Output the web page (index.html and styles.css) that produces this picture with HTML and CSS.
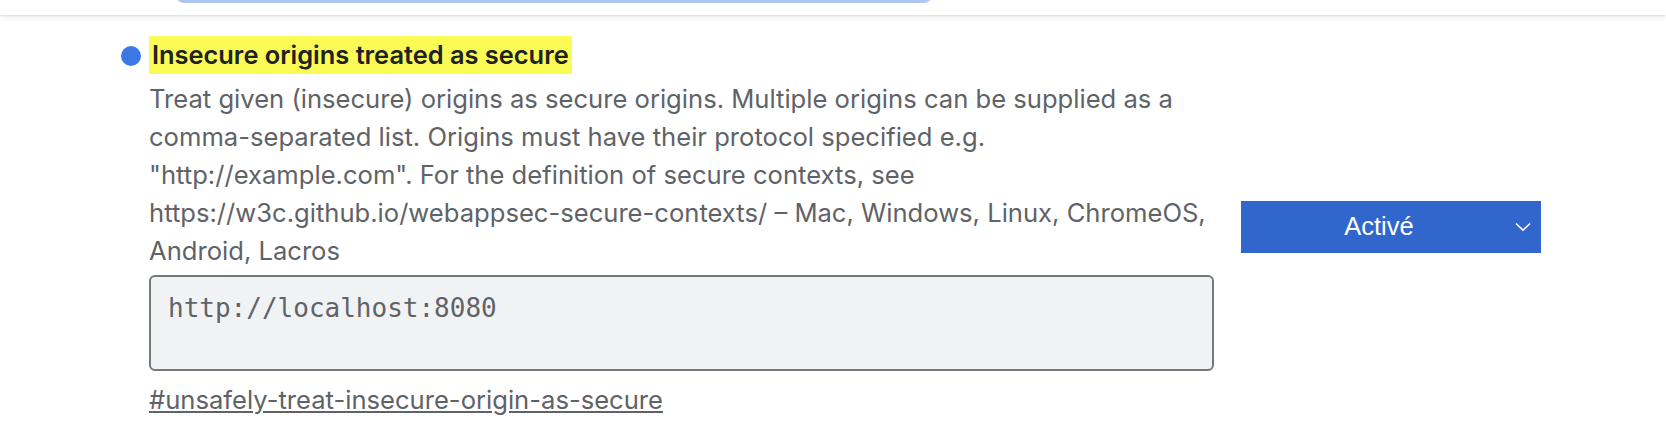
FILE: index.html
```html
<!DOCTYPE html>
<html lang="fr">
<head>
<meta charset="utf-8">
<title>Experiments</title>
<link rel="stylesheet" href="styles.css">
</head>
<body>
<header class="header">
  <div class="search"></div>
</header>
<main class="experiment">
  <div class="experiment-main">
    <h2 class="title"><span class="marker"></span><span class="highlight">Insecure origins treated as secure</span></h2>
    <p class="description">Treat given (insecure) origins as secure origins. Multiple origins can be supplied as a comma-separated list. Origins must have their protocol specified e.g. "http://example.com". For the definition of secure contexts, see https://w3c.github.io/webappsec-secure-contexts/ – Mac, Windows, Linux, ChromeOS, Android, Lacros</p>
    <textarea class="origin-list">http://localhost:8080</textarea>
    <a class="permalink" href="#unsafely-treat-insecure-origin-as-secure">#unsafely-treat-insecure-origin-as-secure</a>
  </div>
  <div class="experiment-actions">
    <div class="select">
      <span class="select-label">Activé</span>
      <svg class="chevron" width="16" height="10" viewBox="0 0 16 10"><path d="M1 1.5 L8 8.2 L15 1.5" fill="none" stroke="#fff" stroke-width="1.6"/></svg>
    </div>
  </div>
</main>
</body>
</html>
```
FILE: styles.css
```css
html, body {
  margin: 0;
  padding: 0;
  background: #fff;
}
body {
  width: 1666px;
  height: 444px;
  overflow: hidden;
  font-family: Inter, "Liberation Sans", Arial, sans-serif;
}
.header {
  height: 15px;
  background: #fff;
  display: flex;
  padding-left: 175px;
  box-shadow: 0 1px 2px rgba(0,0,0,0.10), 0 3px 6px rgba(0,0,0,0.06);
  position: relative;
}
.search {
  width: 758px;
  height: 20px;
  margin-top: -17px;
  background: #adc6f2;
  border-radius: 9px;
}
.experiment {
  display: flex;
  align-items: center;
  padding-left: 149px;
  padding-top: 21px;
}
.experiment-main {
  width: 1065px;
  display: flex;
  flex-direction: column;
  align-items: flex-start;
}
.title {
  margin: 0 0 0 -28px;
  display: flex;
  align-items: center;
  gap: 8px;
  font-size: 25.4px;
  font-weight: 600;
  color: #202124;
}
.marker {
  width: 20px;
  height: 20px;
  border-radius: 50%;
  background: #3b78e6;
  margin-top: 2px;
}
.highlight {
  display: inline-block;
  background: #fbfb55;
  line-height: 38px;
  padding: 0 3px;
}
.description {
  margin: 6px 0 0;
  font-size: 25.6px;
  line-height: 38px;
  color: #5f6368;
  padding-left: 0;
}
.origin-list {
  margin: 5px 0 0;
  box-sizing: border-box;
  width: 1065px;
  height: 96px;
  border: 2px solid #75787c;
  border-radius: 6px;
  background: #f1f2f4;
  font-family: "DejaVu Sans Mono", "Liberation Mono", monospace;
  font-size: 26px;
  line-height: 34px;
  color: #5f6368;
  padding: 14px 17px 12px;
  resize: none;
  outline: none;
}
.permalink {
  margin-top: 10px;
  font-size: 25.6px;
  line-height: 38px;
  color: #5f6368;
  text-decoration: underline;
  padding-left: 0;
}
.experiment-actions {
  margin-left: 27px;
  margin-bottom: 2px;
}
.select {
  width: 300px;
  height: 52px;
  background: #3166cd;
  display: flex;
  align-items: center;
  box-sizing: border-box;
  padding-right: 10px;
}
.select-label {
  flex: 1;
  text-align: center;
  padding-left: 2px;
  font-family: "Liberation Sans", Arial, sans-serif;
  font-size: 25.5px;
  color: #fff;
}
.chevron {
  display: block;
}
```
